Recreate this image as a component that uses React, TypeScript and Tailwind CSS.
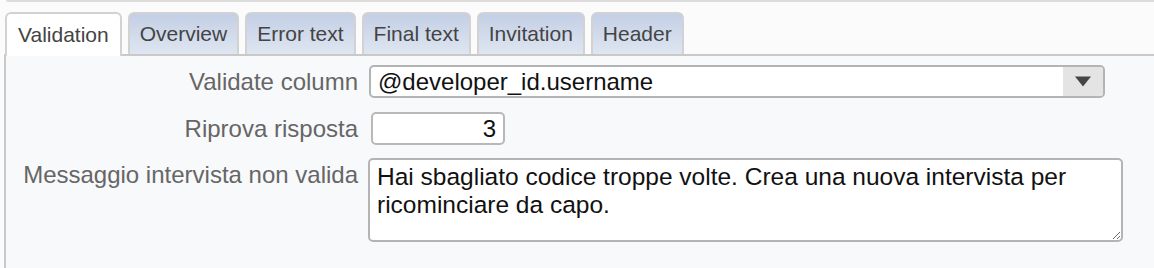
const tabs = ["Validation", "Overview", "Error text", "Final text", "Invitation", "Header"];

function Tab({ label, active }: { label: string; active: boolean }) {
  if (active) {
    return (
      <div className="relative z-10 h-[44px] px-[11px] flex items-center bg-white border-2 border-b-0 border-[#d2d2d2] rounded-t-[6px] text-[21px] text-[#444]">
        {label}
      </div>
    );
  }
  return (
    <div className="h-[42px] px-[10px] flex items-center bg-gradient-to-b from-[#c3cfe5] to-[#dfe6f1] border-2 border-b-0 border-[#d2d2d2] rounded-t-[6px] text-[21px] text-[#444]">
      {label}
    </div>
  );
}

export default function App() {
  return (
    <div className="w-[1154px] h-[268px] overflow-hidden bg-[#fbfbfc] font-['Liberation_Sans',Arial,sans-serif]">
      {/* edge of the box above */}
      <div className="h-[2px] ml-[6px] bg-[#dcdcdc] rounded-bl-[4px]" />

      {/* tab strip */}
      <div className="flex items-start gap-[6px] pl-[5px] mt-[10px] h-[42px]">
        {tabs.map((t, i) => (
          <Tab key={t} label={t} active={i === 0} />
        ))}
      </div>

      {/* panel */}
      <div className="ml-[4px] h-[300px] bg-[#f8f9fb] border-t-2 border-l-2 border-[#c9c9c9] pt-[9px]">
        <div className="grid grid-cols-[352px_1fr] gap-x-[11px] text-[24px]">
          <div className="h-[33px] flex items-center justify-end text-[#666]">Validate column</div>
          <div>
            <div className="w-[736px] h-[33px] flex items-stretch border-2 border-[#b4b4b4] rounded-[5px] bg-white overflow-hidden">
              <span className="flex-1 flex items-center pl-[7px] text-[#111] leading-none">@developer_id.username</span>
              <span className="w-[40px] flex items-center justify-center bg-[#e4e4e4]">
                <svg width="18" height="11" viewBox="0 0 18 11">
                  <path d="M1 0.5 L17 0.5 L9 10.5 Z" fill="#454545" />
                </svg>
              </span>
            </div>
          </div>

          <div className="h-[33px] mt-[14px] flex items-center justify-end text-[#666]">Riprova risposta</div>
          <div className="mt-[14px] pl-[2px]">
            <div className="w-[134px] h-[33px] flex items-center justify-end pr-[7px] border-2 border-[#b8b8b8] rounded-[5px] bg-white text-[#111]">
              3
            </div>
          </div>

          <div className="mt-[13px] pt-[3px] leading-[28px] text-right text-[#666]">Messaggio intervista non valida</div>
          <div className="mt-[13px] -ml-[1px]">
            <textarea
              readOnly
              defaultValue="Hai sbagliato codice troppe volte. Crea una nuova intervista per ricominciare da capo."
              className="block w-[755px] h-[84px] px-[7px] pt-[3px] border-2 border-[#b4b4b4] rounded-[5px] bg-white text-[24.5px] leading-[28px] text-[#111] outline-none font-['Liberation_Sans',Arial,sans-serif]"
            />
          </div>
        </div>
      </div>
    </div>
  );
}
